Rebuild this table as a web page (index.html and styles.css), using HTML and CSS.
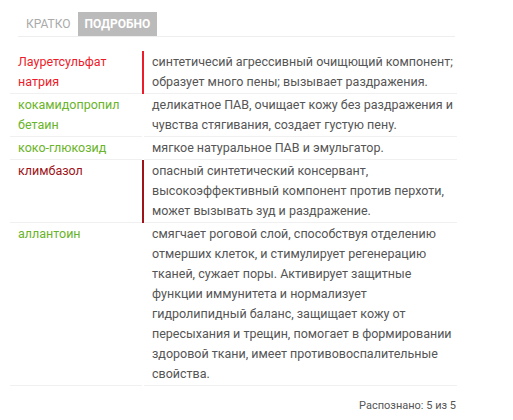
FILE: index.html
```html
<!DOCTYPE html>
<html lang="ru">
<head>
    <meta charset="UTF-8">
    <title>Состав</title>
    <link rel="stylesheet" href="styles.css">
</head>
<body>

<div class="composition">
    <div class="tabs">
        <span class="tab">Кратко</span>
        <span class="tab active">Подробно</span>
    </div>

    <table class="ingredients">
        <tr>
            <td class="name danger">Лауретсульфат натрия</td>
            <td class="desc mark-danger">синтетичесий агрессивный очищющий компонент; образует много пены; вызывает раздражения.</td>
        </tr>
        <tr>
            <td class="name safe">кокамидопропил бетаин</td>
            <td class="desc">деликатное ПАВ, очищает кожу без раздражения и чувства стягивания, создает густую пену.</td>
        </tr>
        <tr>
            <td class="name safe">коко-глюкозид</td>
            <td class="desc">мягкое натуральное ПАВ и эмульгатор.</td>
        </tr>
        <tr>
            <td class="name harmful">климбазол</td>
            <td class="desc mark-harmful">опасный синтетический консервант, высокоэффективный компонент против перхоти, может вызывать зуд и раздражение.</td>
        </tr>
        <tr>
            <td class="name safe">аллантоин</td>
            <td class="desc">смягчает роговой слой, способствуя отделению отмерших клеток, и стимулирует регенерацию тканей, сужает поры. Активирует защитные функции иммунитета и нормализует гидролипидный баланс, защищает кожу от пересыхания и трещин, помогает в формировании здоровой ткани, имеет противовоспалительные свойства.</td>
        </tr>
    </table>

    <div class="recognized">Распознано: 5 из 5</div>
</div>

</body>
</html>
```

FILE: styles.css
```css
body {
    margin: 0;
    font-family: Roboto, "Liberation Sans", Arial, sans-serif;
    background: #fff;
}

.composition {
    width: 447px;
    padding: 12px 0 0 10px;
}

.tabs {
    display: flex;
    margin-left: 8px;
    margin-right: 2px;
    padding-left: 1px;
    border-bottom: 1px solid #eee;
}

.tab {
    height: 24px;
    line-height: 24px;
    padding: 0 7px;
    font-size: 12px;
    text-transform: uppercase;
    color: #aaa;
}

.tab.active {
    background-color: #bbb;
    color: #fff;
    font-weight: bold;
}

.ingredients {
    width: 100%;
    margin-top: 14px;
    border-collapse: collapse;
    font-size: 12.5px;
    line-height: 20px;
}

.ingredients td {
    padding: 1px 8px;
    vertical-align: top;
    border-bottom: 1px solid #f0f0f0;
}

.ingredients .name {
    width: 116px;
}

.ingredients .desc {
    padding-right: 0;
    color: #555;
    border-left: 2px solid transparent;
}

.name.danger {
    color: #ec1c2b;
}

.name.safe {
    color: #6ab42a;
}

.name.harmful {
    color: #9e1418;
}

.desc.mark-danger {
    border-left-color: #ec1c2b;
}

.desc.mark-harmful {
    border-left-color: #9e1418;
}

.recognized {
    margin-top: 13px;
    padding-right: 1px;
    text-align: right;
    font-size: 11px;
    color: #555;
}
```
